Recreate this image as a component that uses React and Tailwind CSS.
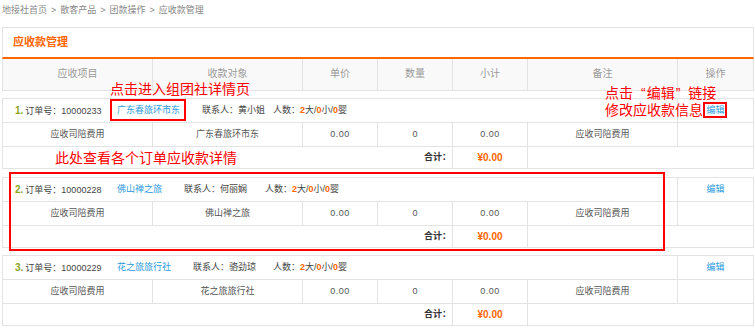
const cols = 'grid grid-cols-[150px_150px_75px_75px_75px_150px_1fr]';

// widths keep the info-row pieces where the page puts them
const orders = [
  { no: 1, id: '10000233', agency: '广东春旅环市东', contact: '黄小姐', agencyW: 'w-[85px]', contactW: 'w-[71px]' },
  { no: 2, id: '10000228', agency: '佛山禅之旅', contact: '何丽娴', agencyW: 'w-[67px]', contactW: 'w-[81px]' },
  { no: 3, id: '10000229', agency: '花之旅旅行社', contact: '骆劲琼', agencyW: 'w-[76px]', contactW: 'w-[80px]' },
];

function OrderBlock({ order, className }) {
  return (
    <div className={`w-[752px] border border-[#e3e3e3] bg-white ${className}`}>
      {/* order info */}
      <div className={`${cols} h-[24px] border-b border-[#e3e3e3]`}>
        <div className="col-span-6 flex items-center whitespace-nowrap border-r border-[#e3e3e3] pl-[12px] text-[9px] text-[#444]">
          <span className="w-[102px]">
            <span className="text-[10px] font-bold text-[#8aa61b]">{order.no}.</span>
            <span className="ml-[2px]">订单号：{order.id}</span>
          </span>
          <a className={`${order.agencyW} text-[#2d9ae0]`}>{order.agency}</a>
          <span className={order.contactW}>联系人：{order.contact}</span>
          <span>
            人数：<b className="text-[#f60]">2</b>大/<b className="text-[#f60]">0</b>小/<b className="text-[#f60]">0</b>婴
          </span>
        </div>
        <div className="flex items-center justify-center text-[9px] text-[#2d9ae0]">编辑</div>
      </div>
      {/* item */}
      <div className={`${cols} h-[24px] border-b border-[#e3e3e3] text-[9px] text-[#555]`}>
        <div className="flex items-center justify-center border-r border-[#e3e3e3]">应收司陪费用</div>
        <div className="flex items-center justify-center border-r border-[#e3e3e3]">{order.agency}</div>
        <div className="flex items-center justify-center border-r border-[#e3e3e3] tracking-[0.5px]">0.00</div>
        <div className="flex items-center justify-center border-r border-[#e3e3e3]">0</div>
        <div className="flex items-center justify-center border-r border-[#e3e3e3] tracking-[0.5px]">0.00</div>
        <div className="flex items-center justify-center border-r border-[#e3e3e3]">应收司陪费用</div>
        <div />
      </div>
      {/* total */}
      <div className={`${cols} h-[21px]`}>
        <div className="col-span-4 flex items-center justify-end border-r border-[#e3e3e3] pr-[1px] text-[9px] font-bold text-[#333]">
          合计：
        </div>
        <div className="flex items-center justify-center border-r border-[#e3e3e3] text-[10px] font-bold text-[#f60]">
          ¥0.00
        </div>
        <div className="col-span-2" />
      </div>
    </div>
  );
}

export default function App() {
  const crumbs = ['地接社首页', '散客产品', '团款操作', '应收款管理'];
  return (
    <div className="relative h-[329px] w-[755px] overflow-hidden bg-white font-['Liberation_Sans','Noto_Sans_CJK_SC',sans-serif]">
      {/* breadcrumb */}
      <div className="flex h-[27px] items-start pl-[2px] text-[9px] leading-[20px] text-[#888]">
        {crumbs.map((c, i) => (
          <span key={c}>
            {i > 0 && <span className="px-[4px]">&gt;</span>}
            {c}
          </span>
        ))}
      </div>

      <div className="ml-[2px] w-[752px]">
        <div className="flex h-[32px] items-center border-x border-t border-b-2 border-x-[#e3e3e3] border-t-[#e3e3e3] border-b-[#f60] pl-[10px] text-[11px] font-bold text-[#f60]">
          应收款管理
        </div>
        <div className={`${cols} h-[32px] border-x border-b border-[#e3e3e3] bg-[#f9f9f9] text-[10px] leading-[10px] text-[#999]`}>
          {['应收项目', '收款对象', '单价', '数量', '小计', '备注', '操作'].map((h, i) => (
            <div
              key={h}
              className={`flex items-center justify-center pb-[1px] ${i < 6 ? 'border-r border-[#e3e3e3]' : ''}`}
            >
              {h}
            </div>
          ))}
        </div>

        <OrderBlock order={orders[0]} className="mt-[7px]" />
        <OrderBlock order={orders[1]} className="mt-[8px]" />
        <OrderBlock order={orders[2]} className="mt-[7px]" />
      </div>

      {/* annotations */}
      <div className="text-[14px] leading-[14px] text-[#f00]">
        <div className="absolute left-[110px] top-[82px]">点击进入组团社详情页</div>
        <div className="absolute left-[605px] top-[85px] leading-[17px]">
          点击<span className="ml-[8px] mr-[1px]">“</span>编辑<span className="ml-[1px] mr-[8px]">”</span>链接
          <br />
          修改应收款信息
        </div>
        <div className="absolute left-[55px] top-[151px]">此处查看各个订单应收款详情</div>
      </div>
      <div className="absolute left-[110px] top-[99px] h-[22px] w-[76px] border-2 border-[#f00]" />
      <div className="absolute left-[703px] top-[102px] h-[16px] w-[24px] border-2 border-[#f00]" />
      <div className="absolute left-[9px] top-[172px] h-[79px] w-[656px] border-2 border-[#f00]" />
    </div>
  );
}
